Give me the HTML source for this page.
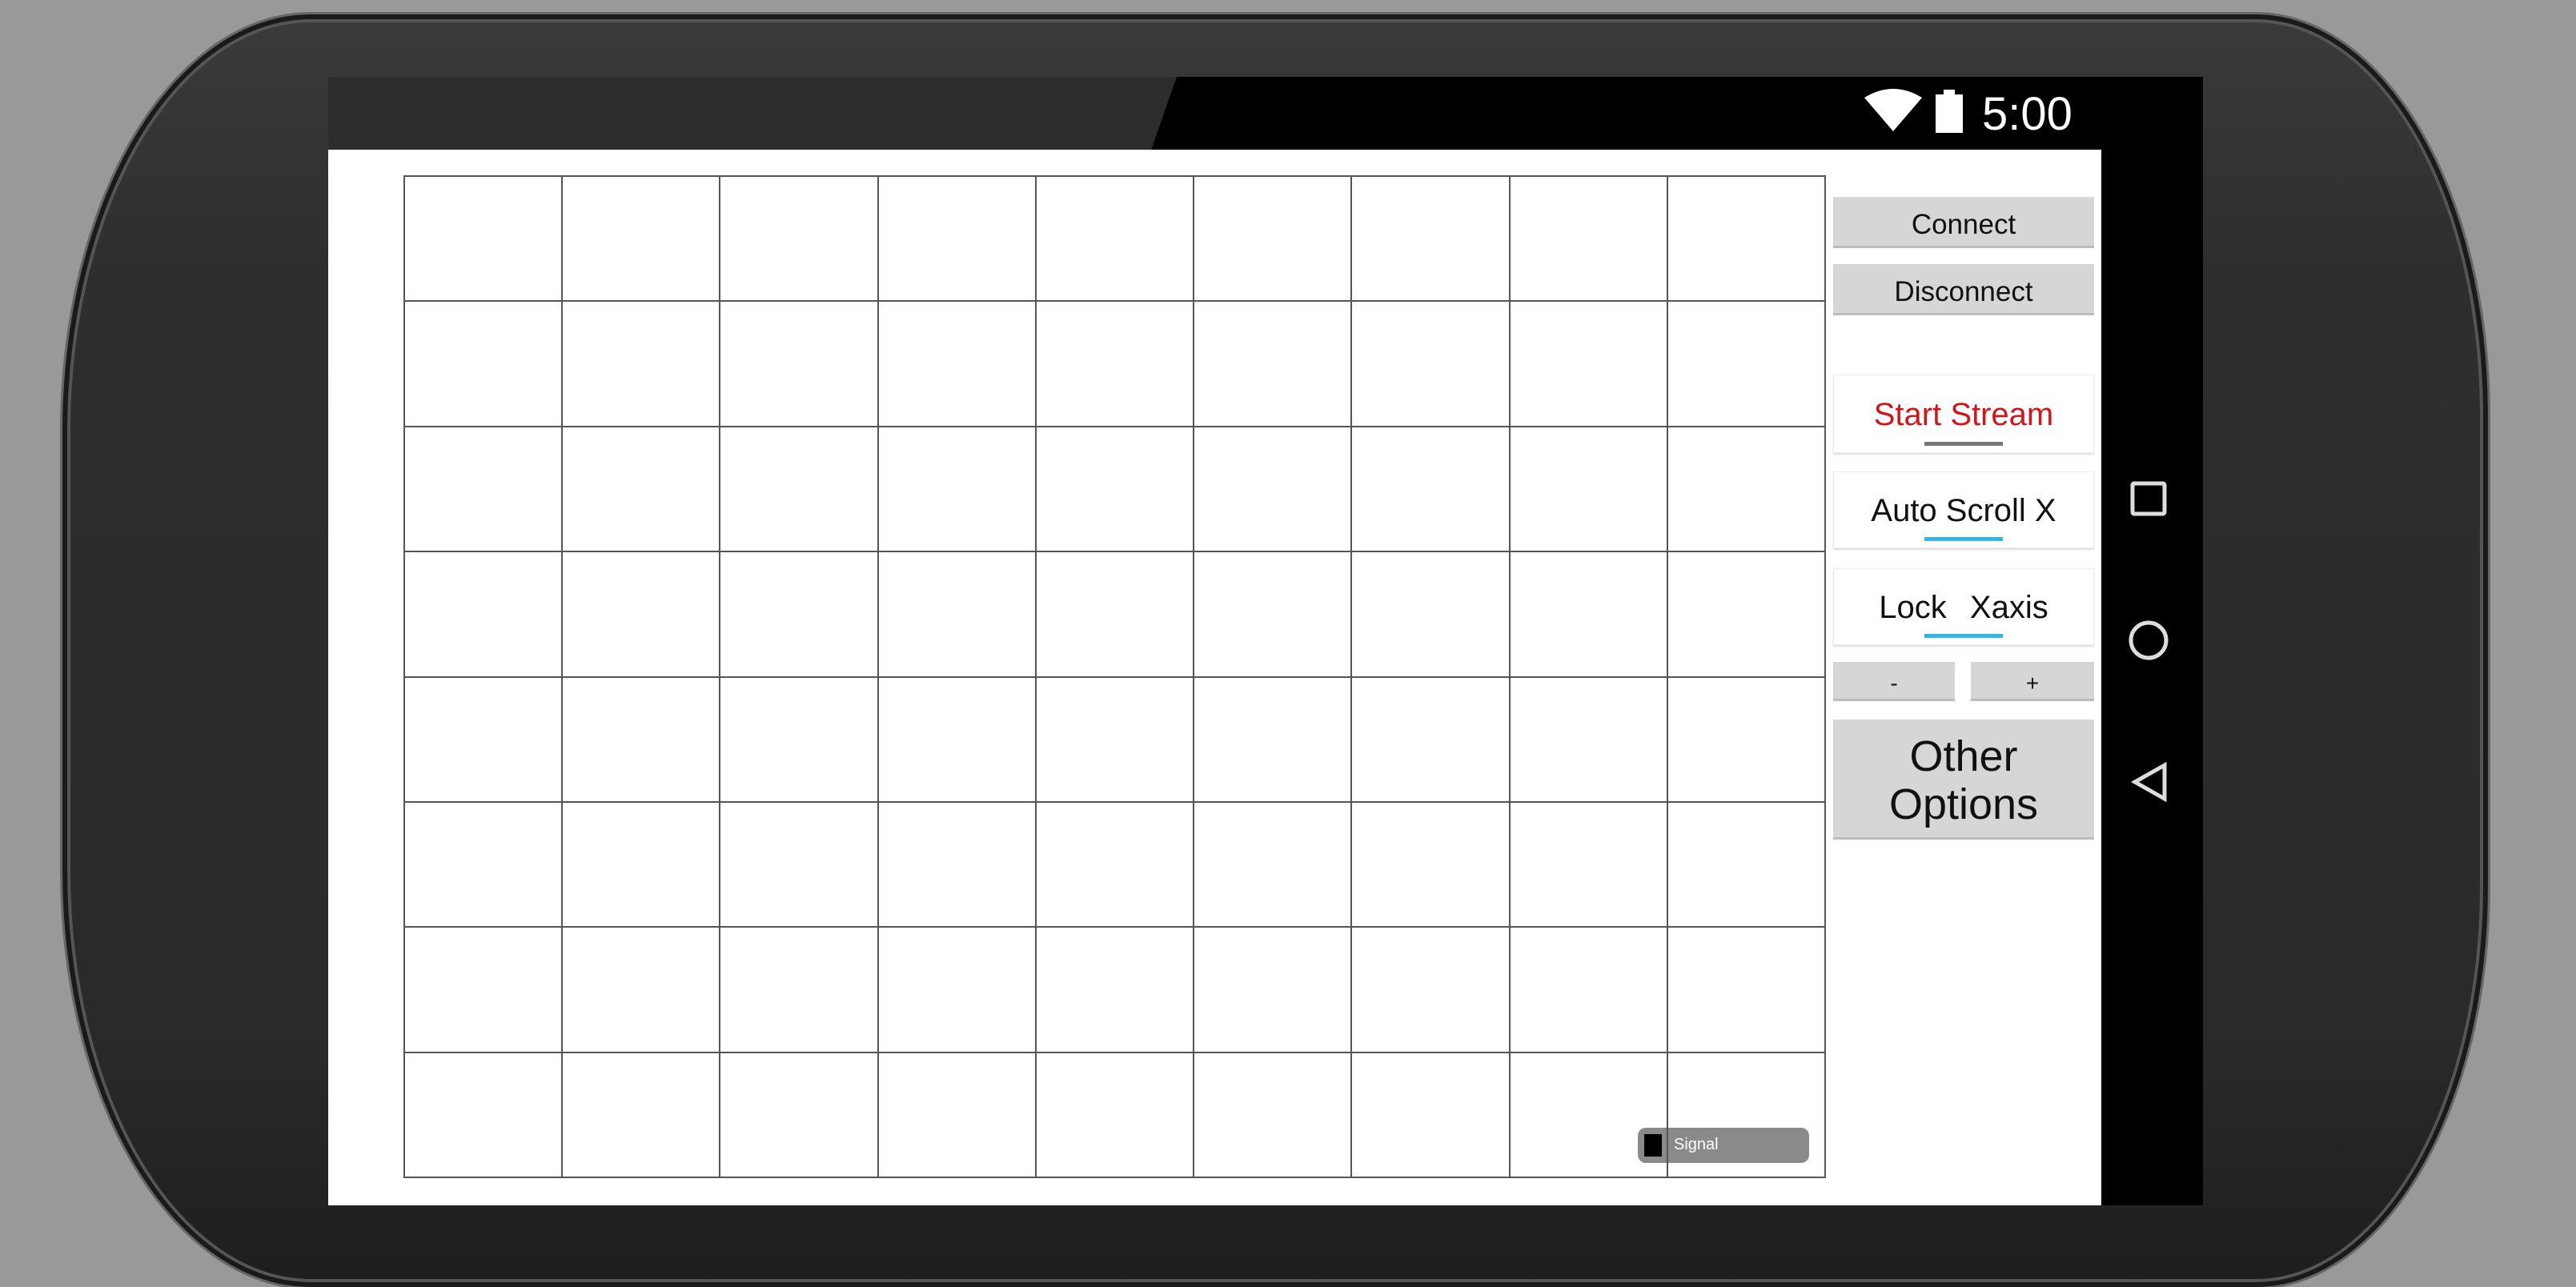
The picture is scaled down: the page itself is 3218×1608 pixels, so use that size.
<!DOCTYPE html>
<html><head><meta charset="utf-8"><style>
*{margin:0;padding:0;box-sizing:border-box}
body{width:3218px;height:1591px;background:#999;position:relative;overflow:hidden;font-family:"Liberation Sans",sans-serif}
.abs{position:absolute}
#phone{left:78px;top:18px;width:3030px;height:1590px;border-radius:310px 290px 290px 310px/520px 500px 500px 520px;background:linear-gradient(#3a3a3a,#2e2e2e 20%,#2a2a2a 80%,#1e1e1e);border:6px solid #1a1a1a;box-shadow:0 0 0 3px #666, inset 0 0 0 4px #555}
#top{left:410px;top:96px;width:2342px;height:91px;background:#000}
#topl{left:410px;top:96px;width:1060px;height:91px;background:#2d2d2d;clip-path:polygon(0 0,100% 0,97% 100%,0 100%)}
#nav{left:2625px;top:187px;width:127px;height:1319px;background:#000}
#scr{left:410px;top:187px;width:2215px;height:1319px;background:#fff}
.btn{position:absolute;background:#d6d6d6;border-bottom:3px solid #bcbcbc;text-align:center;color:#111}
.card{position:absolute;background:#fff;border:1px solid #eee;box-shadow:0 2px 2px #ddd;text-align:center;color:#111;font-size:40px}
.ul{position:absolute;left:50%;margin-left:-49px;width:98px;height:5px;bottom:8px}
</style></head><body>
<div id="phone" class="abs"></div>
<div id="top" class="abs"></div>
<div id="topl" class="abs"></div>
<div id="nav" class="abs"></div>
<div id="scr" class="abs"></div>
<svg class="abs" style="left:0;top:0" width="3218" height="1591">
<g stroke="#555" stroke-width="2" fill="none">
<rect x="505" y="220" width="1775" height="1251"/>
<line x1="702" y1="220" x2="702" y2="1471"/><line x1="899" y1="220" x2="899" y2="1471"/><line x1="1097" y1="220" x2="1097" y2="1471"/><line x1="1294" y1="220" x2="1294" y2="1471"/><line x1="1491" y1="220" x2="1491" y2="1471"/><line x1="1688" y1="220" x2="1688" y2="1471"/><line x1="1886" y1="220" x2="1886" y2="1471"/><line x1="2083" y1="220" x2="2083" y2="1471"/>
<line x1="505" y1="376" x2="2280" y2="376"/><line x1="505" y1="533" x2="2280" y2="533"/><line x1="505" y1="689" x2="2280" y2="689"/><line x1="505" y1="846" x2="2280" y2="846"/><line x1="505" y1="1002" x2="2280" y2="1002"/><line x1="505" y1="1158" x2="2280" y2="1158"/><line x1="505" y1="1315" x2="2280" y2="1315"/>
</g>
<rect x="2046" y="1409" width="214" height="44" rx="10" fill="#8a8a8a"/>
<rect x="2054" y="1417" width="22" height="28" fill="#000"/>
<line x1="2083" y1="1409" x2="2083" y2="1453" stroke="#555" stroke-width="2"/>
<text x="2091" y="1436" font-size="20" fill="#fff" font-family="Liberation Sans">Signal</text>
<path d="M2329 122 Q2365 100 2401 122 L2365 164 Z" fill="#fff"/>
<rect x="2418" y="118" width="34" height="48" fill="#fff"/><rect x="2428" y="112" width="14" height="8" fill="#fff"/>
<text x="2476" y="162" font-size="58" fill="#fff" font-family="Liberation Sans">5:00</text>
<g stroke="#ddd" stroke-width="5" fill="none">
<rect x="2664" y="604" width="40" height="38" rx="2"/>
<circle cx="2684" cy="800" r="22"/>
<path d="M2704 956 L2667 977 L2704 998 Z"/>
</g>
</svg>
<div class="btn" style="left:2290px;top:246px;width:326px;height:64px;font-size:35px;line-height:70px">Connect</div>
<div class="btn" style="left:2290px;top:330px;width:326px;height:64px;font-size:35px;line-height:70px">Disconnect</div>
<div class="card" style="left:2290px;top:468px;width:326px;height:98px;line-height:98px;color:#d0161b">Start Stream<div class="ul" style="background:#777"></div></div>
<div class="card" style="left:2290px;top:589px;width:326px;height:96px;line-height:96px">Auto Scroll X<div class="ul" style="background:#33b5e5"></div></div>
<div class="card" style="left:2290px;top:710px;width:326px;height:96px;line-height:96px;word-spacing:18px">Lock Xaxis<div class="ul" style="background:#33b5e5"></div></div>
<div class="btn" style="left:2290px;top:827px;width:152px;height:49px;font-size:28px;line-height:54px">-</div>
<div class="btn" style="left:2462px;top:827px;width:154px;height:49px;font-size:28px;line-height:54px">+</div>
<div class="btn" style="left:2290px;top:899px;width:326px;height:150px;font-size:54px;line-height:60px;padding-top:16px">Other<br>Options</div>
</body></html>
